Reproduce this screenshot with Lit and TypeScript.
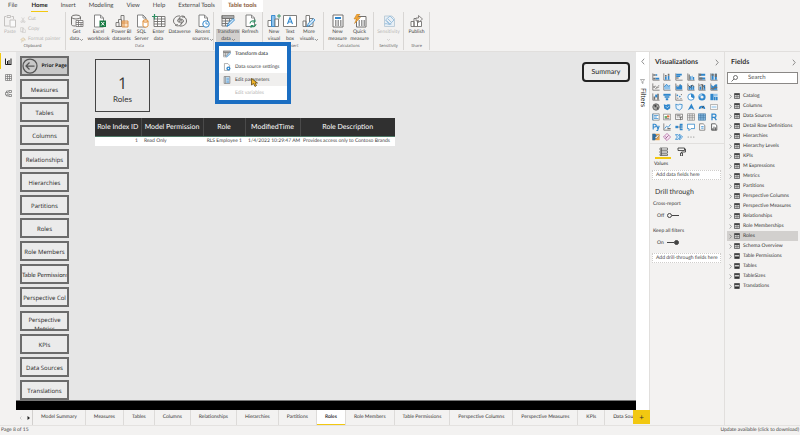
import { LitElement, html, svg, css, nothing, type TemplateResult } from "lit";
import { customElement, property } from "lit/decorators.js";
import { classMap } from "lit/directives/class-map.js";

const G = "#72706e";
const B = "#2f86cc";
const L = "#8fc3ec";

/* Ribbon glyphs, 28 x 28 */
const ribbonIcons: Record<string, TemplateResult> = {
  paste: svg`<g fill="none" stroke="#c4c2c0" stroke-width="2"><path d="M6 5H3v19h9M17 5h4v5M8 3h7v4H8z"/><path d="M14 12h11v14H14z" fill="#fafafa"/></g>`,
  getdata: svg`<g fill="none" stroke="${G}" stroke-width="2"><ellipse cx="12" cy="6" rx="9" ry="4"/><path d="M3 6v15c0 2 3 3 8 3M21 6v5"/><path d="M12 13h14v12H12zM12 17h14M12 21h14M17 13v12M22 17v8" fill="#fff" stroke-width="1.6"/></g>`,
  excel: svg`<path d="M5 2h12l6 6v18H5z" fill="#fff" stroke="#777" stroke-width="1.8"/><path d="M17 2v6h6" fill="none" stroke="#777" stroke-width="1.6"/><path d="M15 13h13v13H15z" fill="#187a43"/><path d="M18.500 16l6 7M24.500 16l-6 7" stroke="#fff" stroke-width="2"/>`,
  pbi: svg`<g fill="#f4f3f2" stroke-width="1.8"><path d="M12 3h6v22h-6z" stroke="${G}"/><path d="M7 11h6v14H7z" stroke="${G}"/><path d="M2 17h6v8H2z" stroke="${G}"/><path d="M14 14h12v12H14z" fill="#fbe3c8" stroke="#d98a3d"/><path d="M14 18h12M18 14v12" stroke="#d98a3d" fill="none"/></g>`,
  sql: svg`<path d="M5 2h11l6 6v18H5z" fill="#fff" stroke="#777" stroke-width="1.8"/><path d="M16 2v6h6" fill="none" stroke="#777" stroke-width="1.6"/><path d="M16 14v10c0 3 10 3 10 0V14" fill="#fff" stroke="#e0913f" stroke-width="2"/><ellipse cx="21" cy="14" rx="5" ry="2.500" fill="#fbdcb8" stroke="#e0913f" stroke-width="2"/>`,
  enter: svg`<path d="M4 5h22v20H4zM4 10h22M4 15h22M4 20h22M11 5v20M19 5v20" fill="#fff" stroke="${G}" stroke-width="1.8"/><path d="M5 0v11M0 5h11" stroke="#2f8f63" stroke-width="2.400"/>`,
  dataverse: svg`<g fill="none" stroke="${G}" stroke-width="2"><path d="M24 6c-5-4-12-2-12 7 0 6 8 7 9 1 0-4-6-5-7-1"/><path d="M4 22c6 4 14 1 14-7 0-7-8-7-9-2 0 4 6 4 6 0"/><path d="M14 4C6 3 1 9 1 14s5 9 9 7M13 24c9 1 14-4 14-10S23 5 18 6"/></g>`,
  recent: svg`<path d="M6 2h11l6 6v17H6z" fill="#fff" stroke="#777" stroke-width="1.800"/><path d="M17 2v6h6" fill="none" stroke="#777" stroke-width="1.600"/><circle cx="20" cy="20" r="6.500" fill="#fff" stroke="${B}" stroke-width="2"/><path d="M20 16v4h4" fill="none" stroke="${B}" stroke-width="1.600"/>`,
  transform: svg`<path d="M2 3h24v6H2z" fill="#aaa" stroke="${G}" stroke-width="1.500"/><path d="M2 9h24M2 14h20M2 19h16M2 24h10M2 3v21M9 9v15M17 9v9" fill="none" stroke="${G}" stroke-width="1.800"/><path d="M12 25l3-7 9-9 3 3-9 9z" fill="#cfe6f8" stroke="${B}" stroke-width="1.800"/>`,
  refresh: svg`<path d="M6 2h11l6 6v17H6z" fill="#fff" stroke="#777" stroke-width="1.800"/><path d="M17 2v6h6" fill="none" stroke="#777" stroke-width="1.600"/><path d="M14 19a6 6 0 0 1 10-4M26 20a6 6 0 0 1-10 4" fill="none" stroke="#2f8f63" stroke-width="2.200"/><path d="M24 11v5h-5M16 28v-5h5" fill="none" stroke="#2f8f63" stroke-width="2"/>`,
  visual: svg`<path d="M2 13h7v12H2z" fill="#fff" stroke="${G}" stroke-width="1.800"/><path d="M9 3h7v22H9z" fill="${L}" stroke="${B}" stroke-width="1.800"/><path d="M16 10h7v15h-7z" fill="#fff" stroke="${G}" stroke-width="1.800"/><path d="M24 0v9M20 4h8" stroke="#2f8f63" stroke-width="1.800"/>`,
  textbox: svg`<path d="M1 3h26v22H1z" fill="#fff" stroke="${G}" stroke-width="1.800"/><path d="M9 20l5-13 5 13M11 16h6" fill="none" stroke="${B}" stroke-width="2.200"/>`,
  morevis: svg`<path d="M2 14h6v11H2zM8 3h7v22H8zM15 9h7v16h-7z" fill="#fff" stroke="${G}" stroke-width="1.800"/><path d="M10 25l3-7 10-9 3 3-9 10z" fill="#cfe6f8" stroke="${B}" stroke-width="1.600"/>`,
  measure: svg`<path d="M4 2h20v24H4z" fill="#fff" stroke="${G}" stroke-width="2"/><path d="M8 6h12v4H8z" fill="${B}"/><path d="M8 14h3M13 14h3M18 14h3M8 18h3M13 18h3M18 18h3M8 22h3M13 22h3M18 22h3" stroke="#333" stroke-width="2.200"/>`,
  quick: svg`<path d="M7 5h19v21H7z" fill="#fff" stroke="${G}" stroke-width="2"/><path d="M11 14h3M16 14h3M21 14h3M11 18h3M16 18h3M21 18h3M11 22h3M16 22h3M21 22h3" stroke="#333" stroke-width="2.200"/><path d="M8 0L2 10h5L3 19 15 7H9l5-7z" fill="#f0a638" stroke="#c77d18"/>`,
  sensitivity: svg`<path d="M5 4h15l5 5v16H5z" fill="#e8eff5" stroke="#b9c9d6" stroke-width="1.800"/><path d="M7 12l9-8 8 8-9 9zM9 13l7 7M12 10l7 7M5 20c4-3 8 3 14 0" fill="none" stroke="#9dc2df" stroke-width="2"/>`,
  publish: svg`<path d="M2 15h6v10H2zM8 9h7v16H8zM15 15h8v10h-8z" fill="#fff" stroke="${G}" stroke-width="1.800"/><path d="M12 14V8h5V3l8 7-8 7v-4z" fill="#f4f3f2" stroke="${G}" stroke-width="1.600"/>`,
  source: svg`<path d="M5 2h12l6 6v18H5z" fill="#fff" stroke="#777" stroke-width="2"/><circle cx="19" cy="19" r="7" fill="${B}"/><circle cx="19" cy="19" r="2.500" fill="#fff"/>`,
  params: svg`<path d="M4 2h20v24H4z" fill="#d5e8f7" stroke="${G}" stroke-width="2.400"/><path d="M9 2v24" stroke="${G}" stroke-width="2"/><path d="M12 8h9M12 13h9M12 18h9M12 22h9" stroke="${B}" stroke-width="2"/>`,
  cut: svg`<g fill="none" stroke="#c0bebc" stroke-width="2.400"><path d="M8 2l9 16M20 2l-9 16"/><circle cx="8" cy="22" r="4"/><circle cx="20" cy="22" r="4"/></g>`,
  copy: svg`<path d="M3 3h12v19H3zM11 8h8l6 6v12H11z" fill="#f6f5f4" stroke="#c0bebc" stroke-width="2.400"/>`,
  painter: svg`<path d="M3 12L15 3l9 8-9 9zM10 17l-4 9M18 6l7 10" fill="#f3e6cf" stroke="#cdbf9f" stroke-width="2.400"/>`,
};

/* Gallery glyphs, 20 x 20 */
const axes = svg`<path d="M2 1v17h17" fill="none" stroke="${G}" stroke-width="2"/>`;
const vizIcons: [string, TemplateResult][] = [
  ["Stacked bar chart", svg`${axes}<path d="M3 3h6v4H3zM3 12h6v4H3z" fill="${G}"/><path d="M9 3h4v4H9zM9 12h9v4H9z" fill="${B}"/>`],
  ["Stacked column chart", svg`${axes}<path d="M5 9h4v8H5zM12 7h4v10h-4z" fill="${B}"/><path d="M5 5h4v4H5zM12 2h4v5h-4z" fill="${G}"/>`],
  ["Clustered bar chart", svg`${axes}<path d="M3 11h6v3H3z" fill="${G}"/><path d="M3 2h14v4H3zM3 7h10v3H3z" fill="${B}"/>`],
  ["Clustered column chart", svg`${axes}<path d="M4 4h3v13H4z" fill="${G}"/><path d="M8 8h3v9H8zM15 10h3v7h-3z" fill="${B}"/><path d="M12 7h3v10h-3z" fill="${L}"/>`],
  ["100% stacked bar chart", svg`${axes}<path d="M3 2h15v5H3zM3 11h15v5H3z" fill="${B}"/><path d="M3 2h5v5H3zM3 11h8v5H3z" fill="${G}"/>`],
  ["100% stacked column chart", svg`${axes}<path d="M4 2h5v15H4zM12 2h5v15h-5z" fill="${B}"/><path d="M4 2h5v5H4zM12 2h5v8h-5z" fill="${G}"/>`],
  ["Line chart", svg`${axes}<path d="M3 12l5-5 4 5 6-7M3 8l6 6 9-4" fill="none" stroke="${G}" stroke-width="1.600"/>`],
  ["Area chart", svg`${axes}<path d="M3 16V9l6-6 4 5 5-2v10z" fill="${L}"/><path d="M3 10l6-7 4 5 5-2" fill="none" stroke="${B}" stroke-width="2"/>`],
  ["Stacked area chart", svg`${axes}<path d="M3 16V7l5 3 5-7 5 4v9z" fill="${B}"/><path d="M3 4l5 5 5-6" fill="none" stroke="${G}" stroke-width="1.600"/>`],
  ["Line and stacked column chart", svg`${axes}<path d="M4 8h4v9H4zM9 5h4v12H9zM14 8h4v9h-4z" fill="${B}"/><path d="M3 6l6 5 4-6 5 4" fill="none" stroke="#444" stroke-width="2"/>`],
  ["Line and clustered column chart", svg`${axes}<path d="M4 9h4v8H4zM14 5h4v12h-4z" fill="${B}"/><path d="M9 3h4v14H9z" fill="${G}"/><path d="M3 6l6-2 9 8" fill="none" stroke="#444" stroke-width="1.600"/>`],
  ["Ribbon chart", svg`${axes}<path d="M3 4l5 5 5-5 5-1v14H3z" fill="${B}"/><path d="M3 13l5 2 5-5 5 2" fill="none" stroke="${G}" stroke-width="3"/>`],
  ["Waterfall chart", svg`${axes}<path d="M4 9h4v8H4zM13 2h4v15h-4z" fill="${G}"/><path d="M8 4h5v7H8z" fill="${B}"/>`],
  ["Funnel", svg`<path d="M1 2h18v5H1z" fill="${B}"/><path d="M4 8h12v4H4zM7 13h6v5H7z" fill="${B}"/>`],
  ["Scatter chart", svg`${axes}<g fill="${B}"><circle cx="6" cy="6" r="2"/><circle cx="12" cy="9" r="2"/></g><g fill="${G}"><circle cx="7" cy="13" r="1.500"/><circle cx="16" cy="4" r="1.500"/><circle cx="15" cy="14" r="1.500"/></g>`],
  ["Pie chart", svg`<circle cx="10" cy="10" r="8" fill="#fff" stroke="${B}" stroke-width="2"/><path d="M10 10V2a8 8 0 0 1 7 12z" fill="${B}"/>`],
  ["Donut chart", svg`<circle cx="10" cy="10" r="6.500" fill="none" stroke="${B}" stroke-width="5"/><path d="M10 3.500a6.500 6.500 0 0 0-6 5" fill="none" stroke="${L}" stroke-width="5"/>`],
  ["Treemap", svg`<path d="M1 2h8v16H1z" fill="${B}"/><path d="M10 2h9v7h-9z" fill="${L}"/><path d="M10 10h4v8h-4zM15 10h4v8h-4z" fill="${B}"/>`],
  ["Map", svg`<circle cx="10" cy="10" r="8" fill="#a9a9a7" stroke="#555" stroke-width="2"/><path d="M5 6l5-2 2 4-4 3zM11 12l5-2-2 6z" fill="#444"/>`],
  ["Filled map", svg`<path d="M2 3l6 2 4-2 6 1v9l-7 5-8-4z" fill="${B}"/><path d="M7 8l4 4 5-5" fill="none" stroke="#cfe6f8" stroke-width="2"/>`],
  ["Shape map", svg`<path d="M2 3l6 2 4-2 6 1-1 9-6 5-8-4z" fill="#eaf4fc" stroke="${B}" stroke-width="2"/>`],
  ["Azure map", svg`<path d="M11 1l8 17-8-5-9 5z" fill="${B}"/>`],
  ["Gauge", svg`<path d="M2 15a8 8 0 0 1 16 0h-4a4 4 0 0 0-8 0z" fill="${B}"/><path d="M10 14l4-7" stroke="#333" stroke-width="2"/>`],
  ["Card", svg`<path d="M1 4h18v12H1z" fill="#fff" stroke="#888" stroke-width="1.600"/><path d="M4 8h3v4H4zM8 8h4v4H8zM13 8h3v4h-3z" fill="${L}"/>`],
  ["Multi-row card", svg`<path d="M2 2h16v16H2z" fill="#fff" stroke="${G}" stroke-width="1.600"/><path d="M5 6h11M5 10h7M5 14h11M2 2v16" stroke="${B}" stroke-width="2"/>`],
  ["KPI", svg`<path d="M1 3h18v14H1z" fill="#fff" stroke="${G}" stroke-width="1.600"/><path d="M4 8h6v4H4z" fill="#4b9b4a"/><path d="M10 6h6v5h-6z" fill="#d9703c"/><path d="M4 14h12" stroke="${G}" stroke-width="2"/>`],
  ["Slicer", svg`<path d="M1 3h18v13H1z" fill="#fff" stroke="${G}" stroke-width="2"/><path d="M4 6h10M4 10h5" stroke="${G}" stroke-width="2"/><path d="M9 9h10l-4 4v6l-2-2v-4z" fill="${G}"/>`],
  ["Table", svg`<path d="M1 2h18v16H1zM1 7h18M1 12h18M7 2v16M13 2v16" fill="#fff" stroke="${G}" stroke-width="1.600"/>`],
  ["Matrix", svg`<path d="M1 2h18v16H1z" fill="${L}"/><path d="M1 2h18v16H1zM1 7h18M1 12h18M7 2v16M13 2v16" fill="none" stroke="#3b6f9b" stroke-width="1.600"/>`],
  ["R script visual", svg`<path d="M5 18V3h6a4 4 0 0 1 0 8H5M11 11l5 7" fill="none" stroke="${B}" stroke-width="3.200"/>`],
  ["Python visual", svg`<path d="M3 16V3h4a3.500 3.500 0 0 1 0 7H3M12 7l3 8M18 7l-4 12h-3" fill="none" stroke="${B}" stroke-width="2.800"/>`],
  ["Key influencers", svg`${axes}<path d="M4 14l5-6 4 3 6-8" fill="none" stroke="${B}" stroke-width="2"/><path d="M11 14h8" stroke="${G}" stroke-width="3"/>`],
  ["Decomposition tree", svg`<path d="M1 7h7v6H1z" fill="${B}"/><path d="M8 10h5M13 4v12" stroke="${G}" stroke-width="2"/><path d="M12 2h7v5h-7zM12 8h7v4h-7zM12 14h7v4h-7z" fill="${B}"/>`],
  ["Q&A", svg`<path d="M1 3h18v11h-9l-5 5v-5H1z" fill="#fff" stroke="${B}" stroke-width="2"/>`],
  ["Smart narrative", svg`<path d="M4 2h9l4 4v12H4z" fill="#fff" stroke="${G}" stroke-width="2"/><path d="M8 9h6M8 13h6" stroke="${B}" stroke-width="2"/>`],
  ["Paginated report", svg`<path d="M4 2h9l4 4v12H4z" fill="#fff" stroke="#444" stroke-width="2"/><path d="M7 18v-5M10 18V9M14 18v-7" stroke="#444" stroke-width="2.200"/>`],
  ["ArcGIS map", svg`<path d="M1 2h18v16H1z" fill="#e8a24a"/><path d="M1 2h7l5 7-6 9H1z" fill="#2c6ca4"/><path d="M7 12l8-8 3 3-8 8z" fill="#f3ead8" stroke="#444"/>`],
  ["Power Apps", svg`<path d="M10 1l9 9-9 9-9-9z" fill="#f6e4f1" stroke="#b572a8" stroke-width="2"/><path d="M6 14l8-8M6 9l4 4" stroke="#944f88" stroke-width="2"/>`],
  ["Power Automate", svg`<path d="M1 4h6l6 6-6 6H1l5-6zM10 4h3l6 6-6 6h-3l5-6z" fill="#d4e9fa" stroke="${B}" stroke-width="1.800"/>`],
  ["More options", svg`<g fill="#777"><circle cx="3" cy="10" r="1.500"/><circle cx="10" cy="10" r="1.500"/><circle cx="17" cy="10" r="1.500"/></g>`],
];

const chevron = (dir: "left" | "right") => html`<svg class="chev" viewBox="0 0 10 16" aria-hidden="true">
  <path d=${dir === "right" ? "M2 1l6 7-6 7" : "M8 1L2 8l6 7"} fill="none" stroke="#666" stroke-width="1.800"/></svg>`;

interface Command { icon: string; text: string[]; size: string; drop?: boolean; state?: string }
interface Group { name: string; items: Command[] }

const groups: Group[] = [
  { name: "Data", items: [
    { icon: "getdata", text: ["Get", "data"], size: "w20", drop: true },
    { icon: "excel", text: ["Excel", "workbook"], size: "w22" },
    { icon: "pbi", text: ["Power BI", "datasets"], size: "w22" },
    { icon: "sql", text: ["SQL", "Server"], size: "w16" },
    { icon: "enter", text: ["Enter", "data"], size: "w16" },
    { icon: "dataverse", text: ["Dataverse"], size: "w24" },
    { icon: "recent", text: ["Recent", "sources"], size: "w20", drop: true },
  ] },
  { name: "Queries", items: [
    { icon: "transform", text: ["Transform", "data"], size: "w24", drop: true, state: "open" },
    { icon: "refresh", text: ["Refresh"], size: "w20" },
  ] },
  { name: "Insert", items: [
    { icon: "visual", text: ["New", "visual"], size: "w16" },
    { icon: "textbox", text: ["Text", "box"], size: "w16" },
    { icon: "morevis", text: ["More", "visuals"], size: "w22", drop: true },
  ] },
  { name: "Calculations", items: [
    { icon: "measure", text: ["New", "measure"], size: "w22" },
    { icon: "quick", text: ["Quick", "measure"], size: "w22" },
  ] },
  { name: "Sensitivity", items: [{ icon: "sensitivity", text: ["Sensitivity", ""], size: "w24", drop: true, state: "off" }] },
  { name: "Share", items: [{ icon: "publish", text: ["Publish"], size: "w20" }] },
];

@customElement("ribbon-bar")
export class RibbonBar extends LitElement {
  static styles = css`
    :host { display: block; background: #f3f2f1; color: #444; }
    button { all: unset; box-sizing: border-box; }
    .tabs { display: flex; gap: 1px; height: 12px; padding-left: 2px; }
    .tab { padding: 0 6px; font-size: 6px; line-height: 12px; white-space: nowrap; }
    .tab.home { font-weight: 700; margin-left: 1px; color: #252423; position: relative; }
    .tab.home::after { content: ""; position: absolute; left: 6px; right: 6px; bottom: 0; height: 1px; background: #f2c811; }
    .tab.context { background: #fff; color: #8a5a3a; font-weight: 700; }
    .groups { display: flex; height: 40px; box-sizing: border-box; padding-bottom: 1px; border-bottom: 1px solid #e1dfdd; }
    .group { display: flex; flex-direction: column; box-sizing: border-box; border-right: 1px solid #d8d6d4; position: relative; }
    .Clipboard { width: 66px; } .Data { width: 148px; } .Queries { width: 49px; } .Insert { width: 61px; }
    .Calculations { width: 50px; } .Sensitivity { width: 30px; } .Share { width: 26px; }
    .items { display: flex; flex: 1; justify-content: center; padding-top: 2px; }
    .Data .items { gap: 1px; }
    .caption { font-size: 4px; line-height: 6px; text-align: center; color: #555; font-family: "Open Sans", sans-serif; }
    .cmd { display: flex; flex-direction: column; align-items: center; font-size: 5px; line-height: 7px; height: 29px; white-space: nowrap; }
    .cmd svg { width: 14px; height: 14px; margin-bottom: 1px; }
    .cmd span { display: flex; align-items: center; gap: 1px; height: 7px; }
    .cmd .caret { width: 3px; height: 2px; margin: 0; }
    .w16 { width: 16px; } .w20 { width: 20px; } .w22 { width: 22px; } .w24 { width: 24px; }
    .open .text { background: #d2d0ce; }
    .text { display: flex; flex-direction: column; align-items: center; width: 100%; }
    .off { color: #b8b6b4; }
    .paste { width: 20px; color: #b8b6b4; }
    .clip { display: flex; flex-direction: column; flex: 1; gap: 3px; padding-top: 2px; }
    .mini { display: flex; align-items: center; gap: 2px; font-size: 5px; line-height: 7px; color: #b8b6b4; white-space: nowrap; }
    .mini svg { width: 6px; height: 6px; }
    .menu { position: absolute; z-index: 2; left: 1px; top: 30px; width: 76px; height: 62px; box-sizing: border-box; border: 4px solid #1b6ec2;
      background: #fff; display: flex; flex-direction: column; justify-content: center; }
    .entry { display: grid; grid-template-columns: 8px 1fr; gap: 4px; align-items: center; height: 13px; padding-left: 4px;
      font-size: 5px; white-space: nowrap; color: #444; }
    .entry svg { width: 8px; height: 8px; }
    .entry.strong { color: #111; }
    .entry.hover { background: #f0efee; }
    .entry.dim { color: #b8b6b4; }
    .pointer { position: absolute; left: 32px; top: 32px; width: 7px; height: 9px; }
  `;

  private icon(name: string) {
    return html`<svg viewBox="0 0 28 28" aria-hidden="true">${ribbonIcons[name]}</svg>`;
  }

  private command(c: Command) {
    const last = c.text.length - 1;
    return html`<button class="cmd ${c.size} ${c.state ?? ""}" ?disabled=${c.state === "off"}>${this.icon(c.icon)}
      <div class="text">${c.text.map((t, i) => html`<span>${t}${c.drop && i === last
        ? html`<svg class="caret" viewBox="0 0 6 4"><path d="M0 0l3 3 3-3" fill="none" stroke="currentColor" stroke-width="1"/></svg>` : nothing}</span>`)}</div>
    </button>`;
  }

  private menu() {
    const entries = [["transform", "Transform data", "strong"], ["source", "Data source settings", ""], ["params", "Edit parameters", "hover"]];
    return html`<div class="menu" role="menu">
      ${entries.map(([i, t, c]) => html`<button role="menuitem" class="entry ${c}">${this.icon(i)}<span>${t}</span></button>`)}
      <button role="menuitem" class="entry dim" disabled><i></i><span>Edit variables</span></button>
      <svg class="pointer" viewBox="0 0 14 18" aria-hidden="true"><path d="M1 1v13l4-3 3 6 3-2-3-5h5z" fill="#f0b429" stroke="#5c430c" stroke-width="1.500"/></svg>
    </div>`;
  }

  render() {
    return html`
      <nav class="tabs" aria-label="Ribbon tabs">
        <button class="tab">File</button>
        <button class="tab home">Home</button>
        <button class="tab">Insert</button>
        <button class="tab">Modeling</button>
        <button class="tab">View</button>
        <button class="tab">Help</button>
        <button class="tab">External Tools</button>
        <button class="tab context">Table tools</button>
      </nav>
      <div class="groups">
        <section class="group Clipboard">
          <div class="items">
            <button class="cmd paste" disabled>${this.icon("paste")}<span>Paste</span></button>
            <div class="clip">
              <button class="mini" disabled>${this.icon("cut")}Cut</button>
              <button class="mini" disabled>${this.icon("copy")}Copy</button>
              <button class="mini" disabled>${this.icon("painter")}Format painter</button>
            </div>
          </div>
          <div class="caption">Clipboard</div>
        </section>
        ${groups.map((g) => html`<section class="group ${g.name}">
          <div class="items">${g.items.map((c) => this.command(c))}</div>
          <div class="caption">${g.name}</div>
          ${g.name === "Queries" ? this.menu() : nothing}
        </section>`)}
      </div>`;
  }
}

const navPages = ["Measures", "Tables", "Columns", "Relationships", "Hierarchies", "Partitions", "Roles", "Role Members",
  "Table Permissions", "Perspective Col", "Perspective Metrics", "KPIs", "Data Sources", "Translations"];

@customElement("report-canvas")
export class ReportCanvas extends LitElement {
  static styles = css`
    :host { display: flex; flex-direction: column; background: #e6e6e6; border-bottom: 9px solid #000; min-width: 0; }
    button { all: unset; box-sizing: border-box; }
    .page { flex: 1; display: flex; gap: 26px; padding: 4px 6px 0 4px; align-items: stretch; border-bottom: 1px solid #777; }
    .nav { width: 49px; display: flex; flex-direction: column; justify-content: space-between; font-family: "Open Sans", sans-serif; }
    .navbtn { height: 20px; border: 2px solid #6b6b6b; background: #ebebeb; color: #252423; font-size: 6px; line-height: 9px;
      text-align: center; padding-top: 3px; overflow: hidden; white-space: nowrap; }
    .navbtn.long { font-family: Lato, sans-serif; }
    .navbtn.wrap { white-space: normal; }
    .prior { display: flex; align-items: center; justify-content: space-between; gap: 2px; padding: 0; background: #c8c8c8; font-size: 5px; font-weight: 700; }
    .prior svg { width: 16px; height: 16px; }
    .body { flex: 1; display: flex; flex-direction: column; align-items: flex-start; gap: 6px; padding-top: 3px; }
    .top { display: flex; width: 100%; justify-content: space-between; align-items: flex-start; }
    .card { width: 55px; height: 53px; box-sizing: border-box; border: 1px solid #444; display: flex; flex-direction: column; align-items: center;
      justify-content: flex-end; padding-bottom: 6px; color: #333; background: #e8e8e8; }
    .value { font-size: 16px; line-height: 20px; font-family: "Open Sans", sans-serif; }
    .label { font-size: 8px; line-height: 12px; }
    .summary { width: 48px; height: 20px; margin-top: 3px; border: 2px solid #222; border-radius: 4px; background: #ebebeb; text-align: center;
      font-size: 7px; line-height: 16px; color: #252423; }
    table { width: 300px; border-collapse: collapse; table-layout: fixed; background: #fff; }
    th { height: 18px; padding: 0; background: #303030; color: #fff; font-size: 7px; line-height: 8px; font-weight: 400; white-space: nowrap; border-right: 1px solid #4a4a4a; border-bottom: 1px solid #4f7a68; box-sizing: border-box; }
    th:last-child { border-right: 0; }
    td { height: 10px; padding: 0 3px; font-size: 5px; line-height: 8px; color: #444; white-space: nowrap; box-sizing: border-box; }
    .num { text-align: right; }
    .c1 { width: 46px; } .c2 { width: 62px; } .c3 { width: 42px; } .c4 { width: 55px; }
  `;

  render() {
    return html`<div class="page">
      <nav class="nav" aria-label="Report pages">
        <button class="navbtn prior"><svg viewBox="0 0 32 32" aria-hidden="true"><circle cx="16" cy="16" r="14" fill="none" stroke="#555" stroke-width="2.500"/>
          <path d="M25 16H8M15 9l-7 7 7 7" fill="none" stroke="#555" stroke-width="2.500"/></svg>Prior Page</button>
        ${navPages.map((p) => html`<button class=${classMap({ navbtn: true, long: p === "Table Permissions", wrap: p === "Perspective Metrics" })}>${p}</button>`)}
      </nav>
      <div class="body">
        <div class="top">
          <div class="card"><div class="value">1</div><div class="label">Roles</div></div>
          <button class="summary">Summary</button>
        </div>
        <table>
          <colgroup><col class="c1"><col class="c2"><col class="c3"><col class="c4"><col></colgroup>
          <thead><tr><th>Role Index ID</th><th>Model Permission</th><th>Role</th><th>ModifiedTime</th><th>Role Description</th></tr></thead>
          <tbody><tr><td class="num">1</td><td>Read Only</td><td class="num">RLS Employee 1</td><td class="num">1/4/2022 10:29:47 AM</td><td>Provides access only to Contoso Brands</td></tr></tbody>
        </table>
      </div>
    </div>`;
  }
}

@customElement("viz-pane")
export class VizPane extends LitElement {
  static styles = css`
    :host { display: flex; flex-direction: column; width: 75px; box-sizing: border-box; background: #f3f2f1; border-right: 1px solid #e1dfdd; color: #333; font-size: 5px; }
    button { all: unset; box-sizing: border-box; }
    .head { display: flex; align-items: center; justify-content: space-between; height: 20px; padding: 0 5px; font-size: 7px; font-weight: 700; }
    .chev { width: 4px; height: 7px; }
    .gallery { display: grid; grid-template-columns: repeat(6, 1fr); grid-auto-rows: 10px; width: 70px; }
    .viz { display: flex; align-items: center; justify-content: center; }
    .viz svg { width: 8px; height: 8px; }
    .wells { display: flex; gap: 2px; margin-top: 1px; border-top: 1px solid #e1dfdd; padding: 3px 5px 0; }
    .well { width: 16px; height: 12px; display: flex; justify-content: center; border-bottom: 2px solid transparent; }
    .well.on { border-bottom-color: #f2c811; }
    .well svg { width: 9px; height: 9px; }
    .name { line-height: 8px; padding: 0 4px; margin-top: 1px; }
    .drop { margin: 2px 3px 0 2px; height: 10px; box-sizing: border-box; border: 1px dotted #d0cecc; background: #fff; padding-left: 3px; line-height: 8px; white-space: nowrap; color: #444; }
    .title { margin: 7px 0 0; padding-left: 5px; font-size: 7px; font-weight: 400; line-height: 10px; }
    .sub { margin-top: 3px; padding-left: 3px; line-height: 8px; }
    .switch { display: flex; align-items: center; gap: 3px; height: 9px; margin: 3px 0 4px; padding-left: 7px; }
    .switch input { appearance: none; margin: 0; width: 12px; height: 5px; display: flex; align-items: center; }
    .switch input::before { content: ""; width: 5px; height: 5px; box-sizing: border-box; border: 1px solid #444; border-radius: 50%; }
    .switch input::after { content: ""; flex: 1; height: 1px; background: #444; }
    .switch input:checked { flex-direction: row-reverse; }
    .switch input:checked::before { background: #444; }
  `;

  render() {
    return html`
      <div class="head"><span>Visualizations</span>${chevron("right")}</div>
      <div class="gallery">${vizIcons.map(([n, i]) => html`<button class="viz" aria-label=${n}><svg viewBox="0 0 20 20">${i}</svg></button>`)}</div>
      <div class="wells">
        <button class="well on" aria-label="Fields"><svg viewBox="0 0 18 18"><path d="M2 2h15v4H2zM2 8h15v4H2zM2 14h15v3H2z" fill="#fff" stroke="#555" stroke-width="1.500"/><path d="M5 2v15" stroke="#555" stroke-width="1.500"/></svg></button>
        <button class="well" aria-label="Format"><svg viewBox="0 0 18 18"><path d="M2 2h13v5H2zM15 4h2v6H9v2M7 12h4v6H7z" fill="none" stroke="#444" stroke-width="1.800"/></svg></button>
      </div>
      <div class="name">Values</div>
      <div class="drop">Add data fields here</div>
      <h2 class="title">Drill through</h2>
      <div class="sub" id="cross">Cross-report</div>
      <label class="switch">Off<input type="checkbox" role="switch" aria-labelledby="cross"></label>
      <div class="sub" id="keep">Keep all filters</div>
      <label class="switch">On<input type="checkbox" role="switch" checked aria-labelledby="keep"></label>
      <div class="drop">Add drill-through fields here</div>`;
  }
}

const tables = ["Catalog", "Columns", "Data Sources", "Detail Row Definitions", "Hierarchies", "Hierarchy Levels", "KPIs", "M Expressions",
  "Metrics", "Partitions", "Perspective Columns", "Perspective Measures", "Relationships", "Role Memberships", "Roles", "Schema Overview",
  "Table Permissions", "Tables", "TableSizes", "Translations"];
const calculated = new Set(["Table Permissions", "Tables", "TableSizes", "Translations"]);

@customElement("fields-pane")
export class FieldsPane extends LitElement {
  @property() selected = "Roles";

  static styles = css`
    :host { display: flex; flex-direction: column; width: 75px; box-sizing: border-box; background: #f3f2f1; color: #333; font-size: 5px; padding: 0 2px; }
    button { all: unset; box-sizing: border-box; }
    .head { display: flex; align-items: center; justify-content: space-between; height: 20px; padding: 0 2px 0 4px; font-size: 7px; font-weight: 700; }
    .chev { width: 4px; height: 7px; flex: none; }
    .search { display: flex; align-items: center; gap: 10px; height: 12px; box-sizing: border-box; border: 1px solid #8a8886; background: #fff; padding: 0 3px; }
    .search svg { width: 7px; height: 7px; }
    .search input { all: unset; flex: 1; min-width: 0; font-size: 6px; line-height: 10px; }
    .search input::placeholder { color: #555; opacity: 1; }
    .list { display: flex; flex-direction: column; margin-top: 7px; }
    .row { display: flex; align-items: center; gap: 2px; height: 10px; padding-left: 2px; white-space: nowrap; line-height: 10px; }
    .row .chev { width: 3px; height: 5px; }
    .row .tbl { width: 6px; height: 6px; margin-right: 1px; flex: none; }
    .row.sel { background: #d2d0ce; }
  `;

  render() {
    return html`
      <div class="head"><span>Fields</span>${chevron("right")}</div>
      <div class="search"><svg viewBox="0 0 14 14" aria-hidden="true"><circle cx="9" cy="5" r="4" fill="none" stroke="#444" stroke-width="1.500"/><path d="M6 8l-5 5" stroke="#444" stroke-width="1.500"/></svg>
        <input type="search" placeholder="Search" aria-label="Search fields"></div>
      <div class="list" role="tree">${tables.map((t) => html`
        <button role="treeitem" class=${classMap({ row: true, sel: t === this.selected })}>${chevron("right")}
          <svg class="tbl" viewBox="0 0 12 12"><path d="M1 1h10v10H1z" fill="#ccc" stroke="#555" stroke-width="1.500"/><path d="M1 1h10v3H1z" fill="#444"/>
          ${calculated.has(t) ? svg`<path d="M2 7h8v4H2z" fill="#333"/>` : svg`<path d="M1 7h10M6 4v7" stroke="#666" stroke-width="1.200"/>`}</svg>${t}</button>`)}
      </div>`;
  }
}

const pageTabs = ["Model Summary", "Measures", "Tables", "Columns", "Relationships", "Hierarchies", "Partitions", "Roles", "Role Members",
  "Table Permissions", "Perspective Columns", "Perspective Measures", "KPIs", "Data Sources"];

@customElement("app-root")
export class AppRoot extends LitElement {
  static styles = css`
    :host { display: flex; flex-direction: column; min-height: 100vh; background: #f3f2f1; font-family: Lato, "Open Sans", sans-serif; text-rendering: geometricPrecision; color: #333; font-size: 5px; }
    button { all: unset; box-sizing: border-box; }
    .main { flex: 1; display: flex; }
    .rail { width: 16px; display: flex; flex-direction: column; align-items: center; padding-top: 1px; box-sizing: border-box; }
    .view { width: 100%; height: 16px; display: flex; align-items: center; justify-content: center; border-left: 1px solid transparent; box-sizing: border-box; }
    .view.on { border-left-color: #f2c811; }
    .view svg { width: 7px; height: 7px; }
    .center { flex: 1; min-width: 0; display: flex; flex-direction: column; }
    .stage { flex: 1; display: flex; }
    report-canvas { flex: 1; }
    .filters { width: 14px; background: #fff; display: flex; flex-direction: column; align-items: center; gap: 14px; padding-top: 6px; box-sizing: border-box; border-right: 1px solid #e1dfdd; }
    .filters .chev { width: 4px; height: 7px; }
    .filters .side { display: flex; align-items: center; gap: 4px; writing-mode: vertical-rl; font-size: 7px; line-height: 8px; color: #252423; }
    .side svg { width: 5px; height: 5px; }
    .pages { display: flex; height: 15px; align-items: stretch; }
    .arrows { width: 17px; display: flex; align-items: center; justify-content: space-around; border-right: 1px solid #d2d0ce; box-sizing: border-box; }
    .arrows svg { width: 3px; height: 4px; }
    .strip { flex: 1; min-width: 0; display: flex; overflow: hidden; }
    .pg { flex: none; padding: 0 8px; line-height: 15px; border-right: 1px solid #dddbd9; white-space: nowrap; }
    .pg.on { background: #fff; font-weight: 700; box-shadow: inset 0 -1px #f2c811; }
    .add { width: 17px; height: 14px; background: #f2c811; text-align: center; font-size: 8px; line-height: 14px; }
    .status { display: flex; justify-content: space-between; height: 10px; padding: 0 1px; box-sizing: border-box; border-top: 1px solid #e4e2e0; line-height: 9px; color: #444; }
  `;

  render() {
    return html`
      <ribbon-bar></ribbon-bar>
      <div class="main">
        <nav class="rail" aria-label="Views">
          <button class="view on" aria-label="Report"><svg viewBox="0 0 14 14"><path d="M1 1v12h12M5 12V6M8 12V4M12 12V1" fill="none" stroke="#222" stroke-width="2"/></svg></button>
          <button class="view" aria-label="Data"><svg viewBox="0 0 14 14"><path d="M1 1h12v12H1zM1 5h12M1 9h12M5 1v12M9 1v12" fill="none" stroke="#777" stroke-width="1.400"/></svg></button>
          <button class="view" aria-label="Model"><svg viewBox="0 0 14 14"><path d="M1 5h5v5H1zM8 1h5v4H8zM8 9h5v4H8zM3 5V2h5M3 10v2h5" fill="none" stroke="#777" stroke-width="1.500"/></svg></button>
        </nav>
        <div class="center">
          <div class="stage">
            <report-canvas></report-canvas>
            <aside class="filters">${chevron("left")}
              <div class="side"><svg viewBox="0 0 10 10" aria-hidden="true"><path d="M1 1h8L6 5v4L4 8V5z" fill="none" stroke="#666"/></svg>Filters</div>
            </aside>
          </div>
          <div class="pages">
            <div class="arrows"><svg viewBox="0 0 6 8"><path d="M5 1L2 4l3 3" fill="none" stroke="#aaa"/></svg><svg viewBox="0 0 6 8"><path d="M1 0l5 4-5 4z" fill="#222"/></svg></div>
            <div class="strip">${pageTabs.map((p) => html`<button class=${classMap({ pg: true, on: p === "Roles" })}>${p}</button>`)}</div>
            <button class="add" aria-label="New page">+</button>
          </div>
        </div>
        <viz-pane></viz-pane>
        <fields-pane></fields-pane>
      </div>
      <footer class="status"><span>Page 8 of 15</span><span>Update available (click to download)</span></footer>`;
  }
}
